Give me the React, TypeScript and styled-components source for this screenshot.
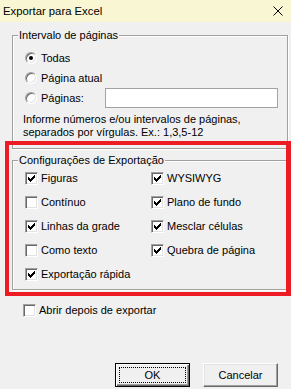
import React from "react";
import styled, { createGlobalStyle } from "styled-components";

const Global = createGlobalStyle`
  html, body { margin: 0; padding: 0; background: #f0f0f0; }
  body { font-family: "Liberation Sans", Arial, sans-serif; font-size: 11px; color: #000; }
  * { box-sizing: border-box; }
`;

const Window = styled.div`
  position: relative;
  width: 291px;
  height: 389px;
  overflow: hidden;
  background: #f0f0f0;
  display: flex;
  flex-direction: column;
`;

const TitleBar = styled.div`
  flex: none;
  height: 22px;
  background: #f8f6d3;
  display: flex;
  align-items: center;
  justify-content: space-between;
  padding: 0 8px 0 3px;
`;

const Title = styled.span`
  font-size: 11.3px;
  line-height: 22px;
`;

const Content = styled.div`
  flex: 1;
  display: flex;
  flex-direction: column;
  padding: 13px 0 2px 12px;
`;

const Group = styled.div<{ $mt?: number; $pad: string }>`
  position: relative;
  width: 276px;
  margin-top: ${(p) => p.$mt ?? 0}px;
  border: 1px solid #a0a0a0;
  box-shadow: inset 1px 1px 0 #fff, 1px 1px 0 #fff;
  padding: ${(p) => p.$pad};
`;

const Legend = styled.span`
  position: absolute;
  left: 5px;
  top: -7px;
  padding: 0 1px;
  line-height: 13px;
  background: #f0f0f0;
`;

const RadioRow = styled.label`
  display: flex;
  align-items: center;
  height: 20px;
  padding-left: 2px;
`;

const RadioDot = styled.span<{ $on?: boolean }>`
  position: relative;
  flex: none;
  width: 12px;
  height: 12px;
  margin-right: 4px;
  border-radius: 50%;
  border: 1px solid;
  border-color: #a0a0a0 #fff #fff #a0a0a0;
  box-shadow: inset 1px 1px 0 #696969, inset -1px -1px 0 #e3e3e3;
  background: #fff;
  &::after {
    content: "";
    display: ${(p) => (p.$on ? "block" : "none")};
    position: absolute;
    left: 3px;
    top: 3px;
    width: 4px;
    height: 4px;
    border-radius: 50%;
    background: #000;
  }
`;

const PageInput = styled.input`
  margin-left: auto;
  width: 173px;
  height: 20px;
  border: 1px solid #a3a3a3;
  background: #fff;
  outline: none;
  padding: 0 3px;
  font: inherit;
`;

const Info = styled.p`
  margin: 5px 0 0;
  line-height: 13px;
`;

const CheckGrid = styled.div`
  display: grid;
  grid-template-columns: 126px 1fr;
  grid-auto-rows: 24px;
  padding-left: 12px;
`;

const CheckRow = styled.label<{ $ml?: number; $mt?: number; $h?: number }>`
  display: flex;
  align-items: center;
  height: ${(p) => p.$h ?? 24}px;
  margin-left: ${(p) => p.$ml ?? 0}px;
  margin-top: ${(p) => p.$mt ?? 0}px;
`;

const Box = styled.span`
  flex: none;
  display: block;
  width: 13px;
  height: 13px;
  margin-right: 3px;
  border: 1px solid;
  border-color: #a0a0a0 #fff #fff #a0a0a0;
  box-shadow: inset 1px 1px 0 #696969, inset -1px -1px 0 #e3e3e3;
  background: #fff;
  svg { display: block; margin: -1px; }
`;

const ButtonRow = styled.div`
  margin-top: auto;
  display: flex;
  justify-content: flex-end;
  gap: 13px;
  padding-right: 13px;
`;

const Button = styled.button<{ $default?: boolean }>`
  width: 75px;
  height: 24px;
  font: inherit;
  color: #000;
  background: #f0f0f0;
  border: 1px solid;
  border-color: ${(p) => (p.$default ? "#000" : "#fff #696969 #696969 #fff")};
  box-shadow: ${(p) =>
    p.$default
      ? "inset 1px 1px 0 #fff, inset -1px -1px 0 #696969, inset -2px -2px 0 #a0a0a0"
      : "inset -1px -1px 0 #a0a0a0, inset 1px 1px 0 #e3e3e3"};
  outline: ${(p) => (p.$default ? "1px dotted #000" : "none")};
  outline-offset: -5px;
  padding: 0;
`;

const Annotation = styled.div`
  position: absolute;
  left: 5px;
  top: 141px;
  width: 286px;
  height: 155px;
  border-style: solid;
  border-color: #ed1c24;
  border-width: 4px 5px 4px 4px;
  pointer-events: none;
`;

const CHECK_PIXELS: [number, number][] = [
  [9, 3],
  [8, 4], [9, 4],
  [3, 5], [7, 5], [8, 5], [9, 5],
  [3, 6], [4, 6], [6, 6], [7, 6], [8, 6],
  [3, 7], [4, 7], [5, 7], [6, 7], [7, 7],
  [4, 8], [5, 8], [6, 8],
  [5, 9],
];

const checkPath = CHECK_PIXELS.map(([x, y]) => `M${x} ${y}h1v1h-1z`).join("");

function Check({
  checked,
  label,
  ml,
  mt,
  h,
}: {
  checked?: boolean;
  label: string;
  ml?: number;
  mt?: number;
  h?: number;
}) {
  return (
    <CheckRow $ml={ml} $mt={mt} $h={h}>
      <Box>
        {checked && (
          <svg width="13" height="13" viewBox="0 0 13 13" shapeRendering="crispEdges">
            <path d={checkPath} fill="#000" />
          </svg>
        )}
      </Box>
      {label}
    </CheckRow>
  );
}

function CloseIcon() {
  return (
    <svg width="10" height="10" viewBox="0 0 10 10">
      <path d="M0.5 0.5L9.5 9.5M9.5 0.5L0.5 9.5" stroke="#000" strokeWidth="1" fill="none" />
    </svg>
  );
}

export default function App() {
  return (
    <>
      <Global />
      <Window>
        <TitleBar>
          <Title>Exportar para Excel</Title>
          <CloseIcon />
        </TitleBar>
        <Content>
          <Group $pad="12px 9px 9px 10px">
            <Legend>Intervalo de páginas</Legend>
            <RadioRow>
              <RadioDot $on />
              Todas
            </RadioRow>
            <RadioRow>
              <RadioDot />
              Página atual
            </RadioRow>
            <RadioRow>
              <RadioDot />
              Páginas:
              <PageInput type="text" />
            </RadioRow>
            <Info>
              Informe números e/ou intervalos de páginas,
              <br />
              separados por vírgulas. Ex.: 1,3,5-12
            </Info>
          </Group>
          <Group $mt={11} $pad="5px 0 3px 0">
            <Legend>Configurações de Exportação</Legend>
            <CheckGrid>
              <Check checked label="Figuras" />
              <Check checked label="WYSIWYG" />
              <Check label="Contínuo" />
              <Check checked label="Plano de fundo" />
              <Check checked label="Linhas da grade" />
              <Check checked label="Mesclar células" />
              <Check label="Como texto" />
              <Check checked label="Quebra de página" />
              <Check checked label="Exportação rápida" />
            </CheckGrid>
          </Group>
          <Check label="Abrir depois de exportar" ml={11} mt={10} h={20} />
          <ButtonRow>
            <Button $default>OK</Button>
            <Button>Cancelar</Button>
          </ButtonRow>
        </Content>
        <Annotation />
      </Window>
    </>
  );
}
